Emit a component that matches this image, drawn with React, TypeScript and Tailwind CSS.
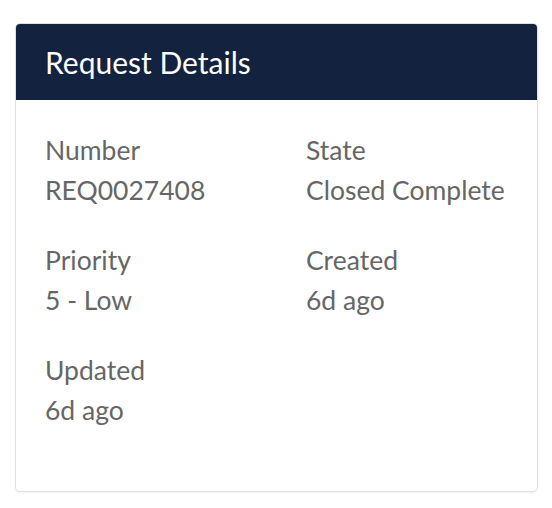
import React from 'react';

const fields = [
  { label: 'Number', value: 'REQ0027408' },
  { label: 'State', value: 'Closed Complete' },
  { label: 'Priority', value: '5 - Low' },
  { label: 'Created', value: '6d ago' },
  { label: 'Updated', value: '6d ago' },
];

export default function App() {
  return (
    <div className="w-[552px] h-[508px] bg-white pt-[23px] pl-[15px]" style={{ fontFamily: 'Lato, "Open Sans", sans-serif' }}>
      <div className="w-[523px] h-[469px] border border-[#dde1e6] rounded-[5px] overflow-hidden shadow-[0_1px_2px_rgba(0,0,0,0.06)]">
        <div className="h-[76px] bg-[#13233f] flex items-center px-[29px]">
          <h2 className="text-white text-[30px] leading-none">Request Details</h2>
        </div>
        <div className="grid grid-cols-[261px_1fr] px-[29px] pt-[32px] gap-y-[34px]">
          {fields.map((f) => (
            <div key={f.label} className="flex flex-col gap-[4px] text-[#666666] text-[26.5px] leading-[36px]">
              <span>{f.label}</span>
              <span>{f.value}</span>
            </div>
          ))}
        </div>
      </div>
    </div>
  );
}
